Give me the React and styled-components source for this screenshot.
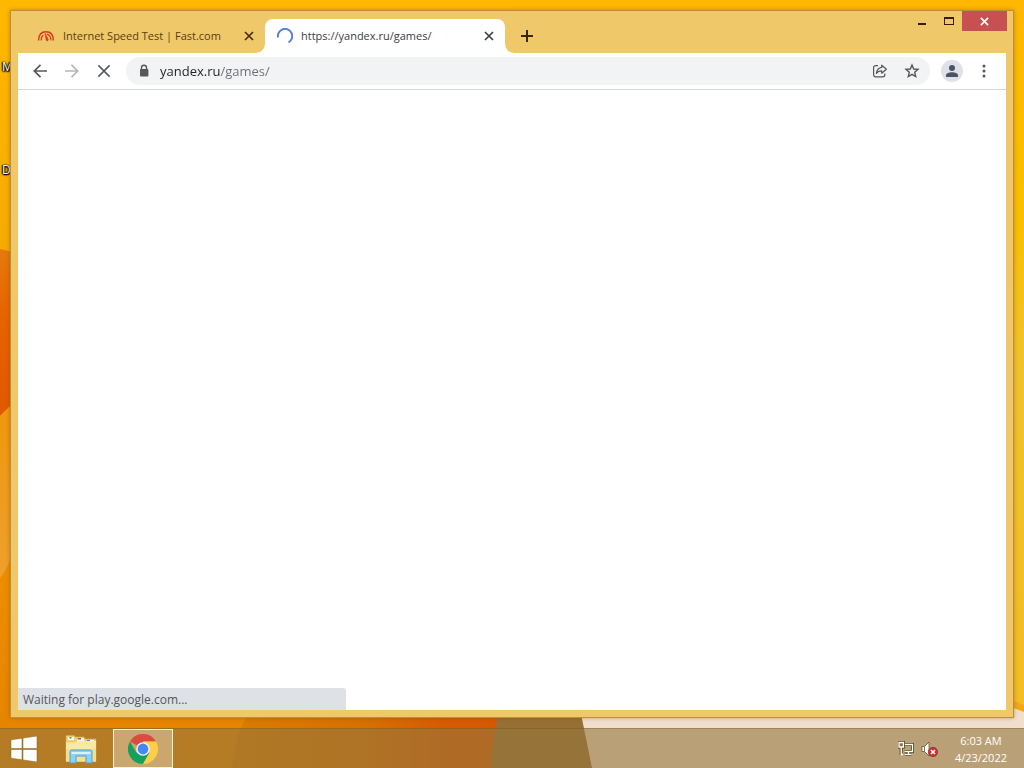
import React, { useState } from 'react';
import styled, { createGlobalStyle } from 'styled-components';

const GlobalStyle = createGlobalStyle`
  * {
    box-sizing: border-box;
  }

  body {
    margin: 0;
    font-family: 'Open Sans', 'Noto Sans', sans-serif;
    font-size: 12px;
    overflow: hidden;
  }

  button {
    padding: 0;
    border: 0;
    background: transparent;
    font: inherit;
    color: inherit;
  }

  svg {
    display: block;
    flex: none;
  }
`;

const Desktop = styled.div`
  position: relative;
  isolation: isolate;
  display: flex;
  flex-direction: column;
  height: 100vh;
  overflow: hidden;
`;

const WallpaperSvg = styled.svg`
  position: absolute;
  inset: 0;
  z-index: -1;
  width: 100%;
  height: 100%;
`;

const ShortcutLabel = styled.span`
  position: absolute;
  left: 2px;
  top: ${props => props.$top}px;
  z-index: -1;
  font-size: 12px;
  line-height: 16px;
  color: white;
  text-shadow: 0 0 2px #000, 1px 1px 1px #000, -1px 0 1px #000, 0 1px 2px #000;
`;

const WindowArea = styled.main`
  flex: 1;
  min-height: 0;
  display: flex;
  padding: 10px;
`;

const Window = styled.section`
  flex: 1;
  min-width: 0;
  display: flex;
  flex-direction: column;
  padding: 0 7px 7px;
  border: 1px solid #c08d3c;
  background: #efc969;
  box-shadow: 0 0 4px rgba(120, 70, 0, 0.45);
`;

const TitleBar = styled.header`
  display: flex;
  align-items: flex-end;
  height: 42px;
`;

const TabStrip = styled.div`
  flex: 1;
  min-width: 0;
  display: flex;
  align-items: flex-end;
  padding-left: 7px;
`;

const Tab = styled.div`
  position: relative;
  display: flex;
  align-items: center;
  width: 240px;
  height: 34px;
  padding: 0 8px 0 12px;
  border-radius: 8px 8px 0 0;
  color: ${props => (props.$active ? '#3c4043' : '#5a3c14')};
  background: ${props => (props.$active ? 'white' : 'transparent')};

  &::before,
  &::after {
    content: '';
    display: ${props => (props.$active ? 'block' : 'none')};
    position: absolute;
    bottom: 0;
    width: 8px;
    height: 8px;
  }

  &::before {
    right: 100%;
    background: radial-gradient(circle at 0 0, transparent 7px, white 8px);
  }

  &::after {
    left: 100%;
    background: radial-gradient(circle at 100% 0, transparent 7px, white 8px);
  }
`;

const TabLabel = styled.button`
  flex: 1;
  min-width: 0;
  display: flex;
  align-items: center;
  gap: 8px;
  font-size: 11px;
  line-height: 16px;
  white-space: nowrap;
  text-align: left;
`;

const TabClose = styled.button`
  display: grid;
  place-items: center;
  width: 16px;
  height: 16px;
  color: ${props => (props.$active ? '#3c4043' : '#4a2c0c')};
`;

const NewTab = styled.button`
  display: grid;
  place-items: center;
  width: 28px;
  height: 34px;
  margin-left: 8px;
  color: #3a2408;
`;

const WindowControls = styled.div`
  align-self: flex-start;
  display: flex;
  margin-right: -1px;
`;

const ControlButton = styled.button`
  display: grid;
  place-items: center;
  width: ${props => (props.$close ? 45 : 27)}px;
  height: 20px;
  color: ${props => (props.$close ? 'white' : '#3c1c08')};
  background: ${props => (props.$close ? '#c75050' : 'transparent')};
`;

const Toolbar = styled.div`
  display: flex;
  align-items: center;
  height: 37px;
  padding: 0 6px;
  background: white;
  border-bottom: 1px solid #d5d7da;
`;

const ToolButton = styled.button`
  display: grid;
  place-items: center;
  width: 32px;
  height: 28px;
  color: ${props => (props.disabled ? '#b4b6b9' : '#54575b')};
`;

const Omnibox = styled.form`
  flex: 1;
  min-width: 0;
  display: flex;
  align-items: center;
  height: 28px;
  margin: 0 6px;
  padding: 0 2px 0 12px;
  border-radius: 14px;
  background: #f1f3f4;
`;

/* host name is darker than the path that follows it */
const AddressInput = styled.input`
  flex: 1;
  min-width: 0;
  height: 20px;
  margin-left: 10px;
  padding: 0;
  border: 0;
  outline: 0;
  font-family: inherit;
  font-size: 13px;
  line-height: 20px;
  color: transparent;
  caret-color: #202124;
  background: linear-gradient(to right, #202124 60px, #6a6e73 60px);
  background-clip: text;
  -webkit-background-clip: text;
`;

const ProfileButton = styled.button`
  display: grid;
  place-items: center;
  width: 22px;
  height: 22px;
  margin: 0 5px;
  border-radius: 50%;
  color: #4d5465;
  background: #dee1e8;
`;

const Page = styled.div`
  flex: 1;
  min-height: 0;
  display: flex;
  align-items: flex-end;
  background: white;
`;

const StatusBubble = styled.output`
  width: 33.2%;
  height: 22px;
  padding: 0 5px;
  border-radius: 0 3px 0 0;
  font-size: 12px;
  line-height: 24px;
  white-space: nowrap;
  color: #54575b;
  background: #dee1e6;
`;

const Taskbar = styled.footer`
  display: flex;
  height: 40px;
  background: rgba(148, 118, 62, 0.6);
  border-top: 1px solid rgba(110, 80, 30, 0.35);
`;

const TaskButton = styled.button`
  display: grid;
  place-items: center;
  width: ${props => (props.$start ? 48 : 60)}px;
  margin-right: ${props => (props.$start ? 3 : 2)}px;
  border: 1px solid ${props => (props.$active ? '#fdf3d8' : 'transparent')};
  background: ${props => (props.$active ? 'rgba(212, 190, 150, 0.65)' : 'transparent')};
`;

const Tray = styled.div`
  display: flex;
  align-items: center;
  gap: 7px;
  margin-left: auto;
  padding-right: 17px;
`;

const TrayButton = styled.button`
  display: grid;
  place-items: center;
`;

const Clock = styled.time`
  margin-left: 10px;
  font-size: 11px;
  line-height: 17px;
  text-align: center;
  color: white;
`;

const Wallpaper = () => (
  <WallpaperSvg viewBox="0 0 1024 768" preserveAspectRatio="none" aria-hidden="true">
    <defs>
      <linearGradient id="sky" x1="0" y1="0" x2="0" y2="1">
        <stop offset="0" stopColor="#ffb800" />
        <stop offset="0.3" stopColor="#f7ac00" />
        <stop offset="0.7" stopColor="#ee9000" />
        <stop offset="1" stopColor="#e48200" />
      </linearGradient>
      <linearGradient id="petal" x1="0" y1="0" x2="0" y2="1">
        <stop offset="0" stopColor="#e57a0c" />
        <stop offset="0.4" stopColor="#e66400" />
        <stop offset="1" stopColor="#e15800" />
      </linearGradient>
      <linearGradient id="glow" x1="0" y1="0" x2="0" y2="1">
        <stop offset="0" stopColor="#ef960c" />
        <stop offset="1" stopColor="#efa02c" />
      </linearGradient>
      <linearGradient id="right" x1="0" y1="0" x2="0" y2="1">
        <stop offset="0" stopColor="#ffb700" />
        <stop offset="0.3" stopColor="#f9c000" />
        <stop offset="0.5" stopColor="#f1c22c" />
        <stop offset="1" stopColor="#f3bc22" />
      </linearGradient>
      <linearGradient id="floor" x1="0" y1="0" x2="1" y2="0">
        <stop offset="0" stopColor="#d97c00" />
        <stop offset="0.5" stopColor="#d67000" />
        <stop offset="0.8" stopColor="#d65a00" />
        <stop offset="1" stopColor="#d65800" />
      </linearGradient>
    </defs>
    <rect width="1024" height="768" fill="url(#sky)" />
    <rect x="512" width="512" height="730" fill="url(#right)" />
    <path d="M0 249 Q8 250 16 254 V400 L0 416 Z" fill="url(#petal)" />
    <path d="M0 416 L16 402 V540 Q10 566 0 578 Z" fill="url(#glow)" />
    <path d="M255 710 Q238 718 232 768 H500 V710 Z" fill="url(#floor)" />
    <path d="M498 710 H582 L594 768 H490 Z" fill="#976f34" />
    <path d="M579 704 H1008 L1024 711 V768 H592 Z" fill="#f1dfcd" />
    <path d="M1008 698 L1024 705 V712 L1008 706 Z" fill="#f5a51c" />
  </WallpaperSvg>
);

const FastIcon = () => (
  <svg width="18" height="16" viewBox="0 0 18 16" fill="none" stroke="#d9391e">
    <path d="M1.500 12.500C1.700 7 4.600 3.800 9 3.800s7.300 3.200 7.500 8.700" strokeWidth="1.500" />
    <path d="M4 12.500c.2-2.600 1-4.400 2.400-5.400" strokeWidth="1.200" />
    <path d="M8 5.200 11.200 11.300a1 1 0 0 1-2 .9Z" fill="#d9391e" strokeWidth="0.600" />
    <path d="M9.800 6.200c2.600.6 4 2.900 4.200 6.300" strokeWidth="1.200" />
  </svg>
);

const Spinner = () => (
  <svg width="16" height="16" viewBox="0 0 16 16" fill="none" stroke="#5b7edc" strokeWidth="2">
    <path d="M1 9.5A7.2 7.2 0 1 1 11.5 14.4" />
  </svg>
);

const CrossIcon = ({ size = 10, width = 1.7 }) => (
  <svg width={size} height={size} viewBox="0 0 10 10" fill="none" stroke="currentColor" strokeWidth={width}>
    <path d="m1 1 8 8M9 1 1 9" />
  </svg>
);

const PlusIcon = () => (
  <svg width="12" height="12" viewBox="0 0 12 12" fill="none" stroke="currentColor" strokeWidth="2">
    <path d="M6 0v12M0 6h12" />
  </svg>
);

const ArrowIcon = ({ forward }) => (
  <svg width="14" height="14" viewBox="0 0 14 14" fill="none" stroke="currentColor" strokeWidth="1.7">
    <path d={forward ? 'M0 7h12.5M6.5 .8 12.7 7l-6.2 6.2' : 'M14 7H1.5M7.5 .8 1.3 7l6.2 6.2'} />
  </svg>
);

const LockIcon = () => (
  <svg width="12" height="14" viewBox="0 0 12 14">
    <path d="M3.5 6V3.7a2.5 2.5 0 0 1 5 0V6" fill="none" stroke="#54575b" strokeWidth="1.4" />
    <rect x="2" y="5" width="8.4" height="7.4" rx="1" fill="#54575b" />
  </svg>
);

const ShareIcon = () => (
  <svg width="16" height="16" viewBox="0 0 16 16" fill="none" stroke="currentColor" strokeWidth="1.2" strokeLinejoin="round">
    <path d="M6 2.6H3.6A2 2 0 0 0 1.6 4.6v7.2a2 2 0 0 0 2 2h7.2a2 2 0 0 0 2-2v-1.2" />
    <path d="M9.7 2.2 14.4 6.2 9.7 10.2V7.9C7.3 7.9 5.6 8.6 4.4 10.4 4.8 7.2 6.6 4.9 9.7 4.4Z" />
  </svg>
);

const StarIcon = () => (
  <svg width="16" height="16" viewBox="0 0 16 16" fill="none" stroke="currentColor" strokeWidth="1.4">
    <path d="m8 2 1.7 4 4.3.4-3.3 2.9 1 4.3L8 11.3l-3.7 2.3 1-4.3L2 6.4 6.300 6Z" />
  </svg>
);

const PersonIcon = () => (
  <svg width="14" height="14" viewBox="0 0 14 14" fill="currentColor">
    <circle cx="7" cy="4" r="3" />
    <path d="M1 13v-1.800C1 9.200 4 8.200 7 8.200s6 1 6 3V13Z" />
  </svg>
);

const DotsIcon = () => (
  <svg width="4" height="14" viewBox="0 0 4 14" fill="currentColor">
    <circle cx="2" cy="2" r="1.5" />
    <circle cx="2" cy="7" r="1.5" />
    <circle cx="2" cy="12" r="1.5" />
  </svg>
);

const WindowsIcon = () => (
  <svg width="28" height="26" viewBox="0 0 28 26" fill="white" stroke="#80601f" strokeWidth="0.5">
    <path d="M1 3.800 12 2.300V12.500H1ZM13 2.100 27 0V12.500H13ZM1 13.500H12V23.700L1 22.200ZM13 13.500H27V26L13 23.900Z" />
  </svg>
);

const ExplorerIcon = () => (
  <svg width="32" height="30" viewBox="0 0 32 30">
    <path d="M1 5V2.500q0-1 1-1h7l1.500 1.500H19l1 2h10q1 0 1 1V27H1Z" fill="#ecd076" stroke="#d3b252" strokeWidth="0.6" />
    <path d="M3 3h6v3H3ZM12 4h7v3h-7ZM22 6h7v3h-7Z" fill="#fdfaf0" />
    <path d="M4.500 3h2v1.500h-2Z" fill="#3c9c4a" />
    <path d="M12.500 4H16v1.500h-3.500Z" fill="#d0502e" />
    <path d="M22 6h3v1.500h-3Z" fill="#3a8bc8" />
    <path d="M1 8.500h9.500L12 7h19v20.500H1Z" fill="#f9e9a2" />
    <path d="M1 15h30v12.500H1Z" fill="#f4df8e" />
    <path d="M5 29V17.500q0-1.500 1.500-1.500h19q1.500 0 1.500 1.500V29h-6v-7H11v7Z" fill="#8dd0f0" stroke="#4aa4d8" />
    <path d="M6.500 18h19v2h-19Z" fill="#d8f2fc" />
  </svg>
);

const ChromeIcon = () => (
  <svg width="30" height="30" viewBox="0 0 30 30">
    <path d="M15 15 2 7.500A15 15 0 0 1 28 7.500H15Z" fill="#dc4b3e" />
    <path d="M15 15 8.500 18.800 2 7.500A15 15 0 0 0 15 30l6.500-11.200Z" fill="#16a05d" />
    <path d="M15 7.500H28A15 15 0 0 1 15 30l6.500-11.200Z" fill="#ffcd46" />
    <circle cx="15" cy="15" r="6.800" fill="#f4f6f8" />
    <circle cx="15" cy="15" r="5.400" fill="#4688f1" />
  </svg>
);

const NetworkIcon = () => (
  <svg width="16" height="16" viewBox="0 0 16 16">
    <path d="M5.500 3.500h9v7h-8M10.500 10.500v3M7 13.500h6.500" fill="none" stroke="#54401c" strokeWidth="3" />
    <path d="M5.500 3.500h9v7h-8M10.500 10.500v3M7 13.500h6.500" fill="none" stroke="white" strokeWidth="1.300" />
    <path d="M1 1.500h4.500V6H1ZM3.200 6v8" fill="#8c7448" stroke="#54401c" strokeWidth="3" />
    <path d="M1 1.500h4.500V6H1ZM3.200 6v7.500H5" fill="#8c7448" stroke="white" strokeWidth="1.300" />
  </svg>
);

const MutedIcon = () => (
  <svg width="17" height="16" viewBox="0 0 17 16">
    <path d="M1 5.500h2.500L8 1v14l-4.500-4.500H1Z" fill="white" stroke="#6b5428" strokeWidth="0.800" />
    <path d="M3.500 5.500v5" stroke="#6b5428" strokeWidth="0.800" />
    <circle cx="12" cy="11" r="4.700" fill="#cc2f2f" stroke="#8f2020" strokeWidth="0.600" />
    <path d="m10 9 4 4M14 9l-4 4" stroke="white" strokeWidth="1.600" />
  </svg>
);

const tabs = [
  { title: 'Internet Speed Test | Fast.com', icon: <FastIcon /> },
  { title: 'https://yandex.ru/games/', icon: <Spinner /> },
];

const App = () => {
  const [activeTab, setActiveTab] = useState(1);
  const [address, setAddress] = useState('yandex.ru/games/');

  return (
    <>
      <GlobalStyle />
      <Desktop>
        <Wallpaper />
        <ShortcutLabel $top={59}>M</ShortcutLabel>
        <ShortcutLabel $top={162}>D</ShortcutLabel>

        <WindowArea>
          <Window>
            <TitleBar>
              <TabStrip>
                {tabs.map((tab, index) => (
                  <Tab key={tab.title} $active={index === activeTab}>
                    <TabLabel onClick={() => setActiveTab(index)}>
                      {tab.icon}
                      {tab.title}
                    </TabLabel>
                    <TabClose $active={index === activeTab} aria-label="Close tab">
                      <CrossIcon />
                    </TabClose>
                  </Tab>
                ))}
                <NewTab aria-label="New tab"><PlusIcon /></NewTab>
              </TabStrip>
              <WindowControls>
                <ControlButton aria-label="Minimize">
                  <svg width="10" height="10" viewBox="0 0 10 10" fill="currentColor">
                    <path d="M1 7h8v2H1Z" />
                  </svg>
                </ControlButton>
                <ControlButton aria-label="Maximize">
                  <svg width="10" height="8" viewBox="0 0 10 8" fill="currentColor">
                    <path fillRule="evenodd" d="M0 0h10v8H0ZM1 2v5h8V2Z" />
                  </svg>
                </ControlButton>
                <ControlButton $close aria-label="Close">
                  <CrossIcon size={9} width={1.8} />
                </ControlButton>
              </WindowControls>
            </TitleBar>

            <Toolbar>
              <ToolButton aria-label="Back"><ArrowIcon /></ToolButton>
              <ToolButton disabled aria-label="Forward"><ArrowIcon forward /></ToolButton>
              <ToolButton aria-label="Stop loading"><CrossIcon size={14} width={1.1} /></ToolButton>
              <Omnibox onSubmit={event => event.preventDefault()}>
                <LockIcon />
                <AddressInput
                  aria-label="Address"
                  value={address}
                  onChange={event => setAddress(event.target.value)}
                />
                <ToolButton type="button" aria-label="Share"><ShareIcon /></ToolButton>
                <ToolButton type="button" aria-label="Bookmark"><StarIcon /></ToolButton>
              </Omnibox>
              <ProfileButton aria-label="Profile"><PersonIcon /></ProfileButton>
              <ToolButton aria-label="Menu"><DotsIcon /></ToolButton>
            </Toolbar>

            <Page>
              <StatusBubble>Waiting for play.google.com...</StatusBubble>
            </Page>
          </Window>
        </WindowArea>

        <Taskbar>
          <TaskButton $start aria-label="Start"><WindowsIcon /></TaskButton>
          <TaskButton aria-label="File Explorer"><ExplorerIcon /></TaskButton>
          <TaskButton $active aria-label="Google Chrome"><ChromeIcon /></TaskButton>
          <Tray>
            <TrayButton aria-label="Network"><NetworkIcon /></TrayButton>
            <TrayButton aria-label="Volume"><MutedIcon /></TrayButton>
            <Clock dateTime="2022-04-23T06:03">
              6:03 AM<br />4/23/2022
            </Clock>
          </Tray>
        </Taskbar>
      </Desktop>
    </>
  );
};

export default App;
